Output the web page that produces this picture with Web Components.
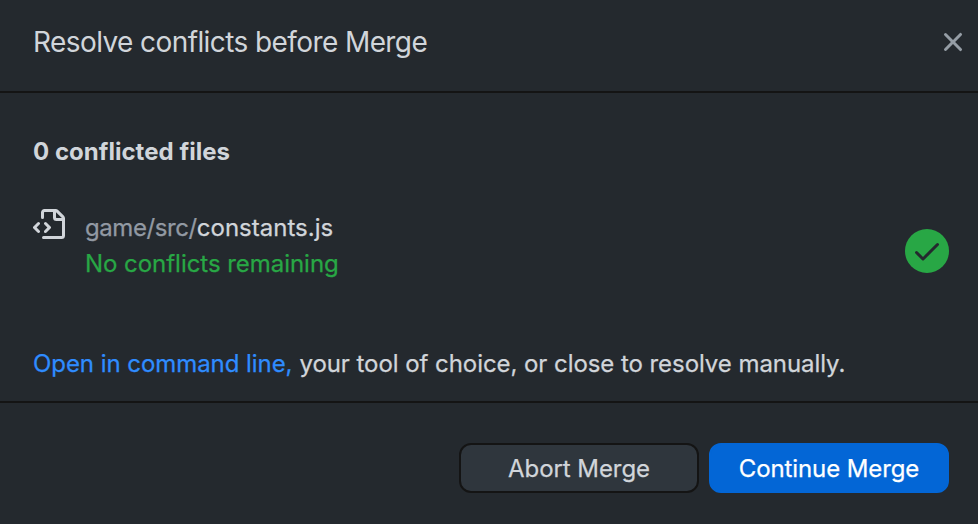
<!DOCTYPE html>
<html lang="en">
<head>
<meta charset="utf-8">
<title>Resolve conflicts before Merge</title>
<style>
html, body { margin: 0; height: 100%; background: #24292e; overflow: hidden; }
body { font-family: Inter, "Liberation Sans", sans-serif; font-size: 24px; font-weight: 400; -webkit-text-stroke: 0.25px currentColor; color: #d1d5da; }
</style>
</head>
<body>
<merge-dialog>
  <dialog-header slot="header">Resolve conflicts before Merge</dialog-header>
  <conflict-count>0 conflicted files</conflict-count>
  <file-row><span slot="dir">game/src/</span><span slot="name">constants.js</span><span slot="status">No conflicts remaining</span></file-row>
  <tool-hint><span slot="link">Open in command line,</span><span>your tool of choice, or close to resolve manually.</span></tool-hint>
  <dialog-button slot="footer">Abort Merge</dialog-button>
  <dialog-button slot="footer" primary>Continue Merge</dialog-button>
</merge-dialog>
<script>
const ICONS = {
  close: 'M3.72 3.72a.75.75 0 0 1 1.06 0L8 6.94l3.22-3.22a.75.75 0 1 1 1.06 1.06L9.06 8l3.22 3.22a.75.75 0 1 1-1.06 1.06L8 9.06l-3.22 3.22a.75.75 0 0 1-1.06-1.06L6.94 8 3.72 4.78a.75.75 0 0 1 0-1.06z',
  check: 'M13.78 4.22a.75.75 0 0 1 0 1.06l-7.25 7.25a.75.75 0 0 1-1.06 0L2.22 9.28a.75.75 0 0 1 1.06-1.06L6 10.94l6.72-6.72a.75.75 0 0 1 1.06 0z',
  file: 'M4 1.75C4 .784 4.784 0 5.75 0h5.586c.464 0 .909.184 1.237.513l2.914 2.914c.329.328.513.773.513 1.237v8.586A1.75 1.75 0 0 1 14.25 15h-9a.75.75 0 0 1 0-1.5h9a.25.25 0 0 0 .25-.25V6h-2.75A1.75 1.75 0 0 1 10 4.25V1.5H5.75a.25.25 0 0 0-.25.25v2.5a.75.75 0 0 1-1.5 0Zm1.72 4.97a.75.75 0 0 1 1.06 0l2 2a.75.75 0 0 1 0 1.06l-2 2a.749.749 0 0 1-1.275-.326.749.749 0 0 1 .215-.734l1.47-1.47-1.47-1.47a.75.75 0 0 1 0-1.06ZM3.28 7.78 1.81 9.25l1.47 1.47a.751.751 0 0 1-.018 1.042.751.751 0 0 1-1.042.018l-2-2a.75.75 0 0 1 0-1.06l2-2a.751.751 0 0 1 1.042.018.751.751 0 0 1 .018 1.042Zm8.22-6.218V4.25c0 .138.112.25.25.25h2.688l-.011-.013-2.914-2.914-.013-.011Z'
};
function define(name, css, html) {
  customElements.define(name, class extends HTMLElement {
    constructor() {
      super();
      this.attachShadow({ mode: 'open' }).innerHTML = '<style>' + css + '</style>' + html;
    }
  });
}
customElements.define('ui-icon', class extends HTMLElement {
  connectedCallback() {
    if (this.shadowRoot) return;
    this.attachShadow({ mode: 'open' }).innerHTML =
      '<style>:host{display:block;flex:none;width:32px;height:32px}svg{display:block}</style>' +
      '<svg width="32" height="32" viewBox="0 0 16 16" fill="currentColor" aria-hidden="true"><path fill-rule="evenodd" d="' + ICONS[this.getAttribute('name')] + '"/></svg>';
  }
});
define('merge-dialog', `
  :host { display: flex; flex-direction: column; height: 524px; white-space: nowrap; }
  main { flex: 1; box-sizing: border-box; padding: 43px 29px 0 33px; }
  footer { box-sizing: border-box; height: 123px; border-top: 2px solid #141414; padding: 40px 29px 0; display: flex; justify-content: flex-end; gap: 10px; }`,
  '<slot name="header"></slot><main><slot></slot></main><footer><slot name="footer"></slot></footer>');
define('dialog-header', `
  :host { display: flex; box-sizing: border-box; height: 93px; border-bottom: 2px solid #141414; padding: 26px 9px 0 33px; justify-content: space-between; font-size: 28px; -webkit-text-stroke: 0; line-height: 32px; letter-spacing: -0.59px; }
  ui-icon { color: #959da5; }`,
  '<span><slot></slot></span><ui-icon name="close"></ui-icon>');
define('conflict-count', `
  :host { display: block; font-weight: 700; -webkit-text-stroke: 0; line-height: 32px; letter-spacing: 0.03px; }`,
  '<slot></slot>');
define('file-row', `
  :host { display: flex; align-items: flex-start; margin-top: 41px; height: 72px; line-height: 36px; }
  .text { flex: 1; padding: 1px 0 0 20px; }
  .dir { color: #9299a3; letter-spacing: -0.42px; }
  .name { letter-spacing: 0.02px; }
  .status { color: #28a745; letter-spacing: -0.04px; }
  .badge { display: flex; align-items: center; justify-content: center; width: 44px; height: 44px; border-radius: 50%; background: #28a745; color: #24292e; margin-top: 20px; }`,
  '<ui-icon name="file"></ui-icon><div class="text"><div><span class="dir"><slot name="dir"></slot></span><span class="name"><slot name="name"></slot></span></div><div class="status"><slot name="status"></slot></div></div><div class="badge"><ui-icon name="check"></ui-icon></div>');
define('tool-hint', `
  :host { display: flex; gap: 7px; margin-top: 67px; line-height: 32px; letter-spacing: -0.06px; }
  .link { color: #2f8cff; }`,
  '<span class="link"><slot name="link"></slot></span><slot></slot>');
define('dialog-button', `
  :host { display: flex; align-items: center; justify-content: center; box-sizing: border-box; width: 240px; height: 50px; border: 2px solid #141414; border-radius: 12px; background: #2f363d; letter-spacing: -0.07px; }
  :host([primary]) { background: #0366d6; border-color: #0366d6; color: #fff; letter-spacing: -0.1px; }`,
  '<slot></slot>');
</script>
</body>
</html>
